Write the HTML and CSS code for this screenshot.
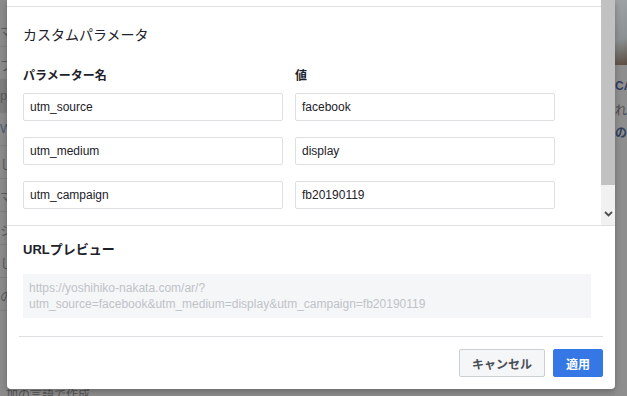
FILE: index.html
```html
<!DOCTYPE html>
<html lang="ja">
<head>
    <meta charset="UTF-8">
    <title>カスタムパラメータ</title>
    <link rel="stylesheet" href="styles.css">
</head>
<body>
    <div class="page">
        <div class="page-left">
            <div class="ghost-row">マ</div>
            <div class="ghost-row">プ</div>
            <div class="ghost-row dark">p</div>
            <div class="ghost-row blue">W</div>
            <div class="ghost-row">し</div>
            <div class="ghost-row">マ</div>
            <div class="ghost-row">シ</div>
            <div class="ghost-row">し</div>
            <div class="ghost-row">の</div>
        </div>
        <div class="page-right">
            <div class="ghost-photo"></div>
            <div class="ghost-text blue">CA</div>
            <div class="ghost-text">れは</div>
            <div class="ghost-text blue">のフ</div>
        </div>
        <div class="page-bottom">加の言語で作成</div>
    </div>

    <div class="modal">
        <div class="scroll-area">
            <div class="scroll-content">
                <div class="top-rule"></div>
                <h2 class="modal-title">カスタムパラメータ</h2>
                <div class="param-grid">
                    <div class="col-label">パラメーター名</div>
                    <div class="col-label">値</div>
                    <div class="field">utm_source</div>
                    <div class="field">facebook</div>
                    <div class="field">utm_medium</div>
                    <div class="field">display</div>
                    <div class="field">utm_campaign</div>
                    <div class="field">fb20190119</div>
                </div>
            </div>
            <div class="scrollbar">
                <div class="scroll-thumb"></div>
                <div class="scroll-track"></div>
                <div class="scroll-arrow">
                    <svg width="9" height="6" viewBox="0 0 9 6"><path d="M1 1 L4.5 4.5 L8 1" fill="none" stroke="#505050" stroke-width="1.8"/></svg>
                </div>
            </div>
        </div>

        <div class="preview-section">
            <h3 class="preview-title">URLプレビュー</h3>
            <div class="preview-box">https://yoshihiko-nakata.com/ar/?<br>utm_source=facebook&amp;utm_medium=display&amp;utm_campaign=fb20190119</div>
        </div>

        <div class="modal-footer">
            <button class="btn btn-cancel">キャンセル</button>
            <button class="btn btn-apply">適用</button>
        </div>
    </div>
</body>
</html>
```

FILE: styles.css
```css
* {
    margin: 0;
    padding: 0;
    box-sizing: border-box;
}

body {
    width: 627px;
    height: 396px;
    overflow: hidden;
    background: #8b8b8b;
    font-family: 'Liberation Sans', 'Noto Sans CJK JP', sans-serif;
    color: #1d2129;
    position: relative;
}

/* dimmed page behind the dialog */
.page {
    width: 100%;
    height: 100%;
    display: flex;
    justify-content: space-between;
    position: relative;
}

.page-left {
    width: 20px;
    display: flex;
    flex-direction: column;
    padding-top: 14px;
}

.ghost-row {
    height: 33px;
    border-bottom: 1px solid #7e7e7e;
    font-size: 13px;
    color: #5a5a5a;
    padding-top: 8px;
    overflow: hidden;
}

.ghost-row.dark { background: #7d7d7d; }
.ghost-row.blue { color: #4e5a78; }

.page-right {
    width: 12px;
    background: #8e8e8e;
    display: flex;
    flex-direction: column;
    font-size: 12px;
    color: #4a4a4a;
    overflow: hidden;
}

.ghost-photo {
    height: 65px;
    background: linear-gradient(160deg, #9ea3a6 0%, #8b9092 60%, #5a4c40 100%);
    margin-bottom: 14px;
}

.ghost-text {
    height: 22px;
    white-space: nowrap;
}

.ghost-text.blue { color: #33405e; font-weight: bold; }

.page-bottom {
    position: absolute;
    left: 6px;
    bottom: -6px;
    font-size: 12px;
    color: #505050;
}

/* dialog */
.modal {
    position: absolute;
    left: 7px;
    top: 0;
    width: 608px;
    background: #fff;
    border-radius: 0 0 4px 4px;
    box-shadow: 0 2px 6px rgba(0, 0, 0, 0.25);
}

.scroll-area {
    display: flex;
    height: 226px;
    border-bottom: 1px solid #dddfe2;
}

.scroll-content {
    flex-grow: 1;
    padding: 0 0 0 16px;
    overflow: hidden;
}

.top-rule {
    height: 7px;
    border-bottom: 1px solid #dddfe2;
    margin-left: -16px;
}

.modal-title {
    font-size: 14px;
    font-weight: normal;
    margin-top: 18px;
    line-height: 20px;
    color: #1d2129;
}

.param-grid {
    display: grid;
    grid-template-columns: 260px 260px;
    column-gap: 12px;
    row-gap: 16px;
    margin-top: 24px;
}

.col-label {
    font-size: 12px;
    font-weight: bold;
    line-height: 14px;
    margin-bottom: -6px;
}

.field {
    height: 28px;
    border: 1px solid #dddfe2;
    border-radius: 2px;
    font-size: 12px;
    line-height: 26px;
    padding-left: 6px;
    color: #1d2129;
}

.scrollbar {
    width: 14px;
    display: flex;
    flex-direction: column;
}

.scroll-thumb {
    height: 185px;
    background: #c1c1c1;
}

.scroll-track {
    flex-grow: 1;
    background: #f1f1f1;
}

.scroll-arrow {
    height: 21px;
    background: #f1f1f1;
    display: flex;
    justify-content: center;
    padding-top: 7px;
}

.preview-section {
    padding: 16px 16px 18px;
}

.preview-title {
    font-size: 13px;
    font-weight: bold;
    line-height: 16px;
    margin-bottom: 16px;
}

.preview-box {
    width: 568px;
    background: #f5f6f7;
    color: #bec3c9;
    font-size: 12px;
    line-height: 16px;
    padding: 6px 6px;
    white-space: nowrap;
}

.modal-footer {
    margin: 0 12px;
    border-top: 1px solid #dddfe2;
    padding: 12px 0 12px;
    display: flex;
    justify-content: flex-end;
    gap: 8px;
}

.btn {
    height: 28px;
    font-family: 'Liberation Sans', 'Noto Sans CJK JP', sans-serif;
    font-size: 12px;
    font-weight: bold;
    border-radius: 2px;
    padding: 0 12px;
}

.btn-cancel {
    width: 86px;
    background: #f5f6f7;
    border: 1px solid #ccd0d5;
    color: #4b4f56;
}

.btn-apply {
    width: 50px;
    background: #3578e5;
    border: 1px solid #3578e5;
    color: #fff;
}
```
